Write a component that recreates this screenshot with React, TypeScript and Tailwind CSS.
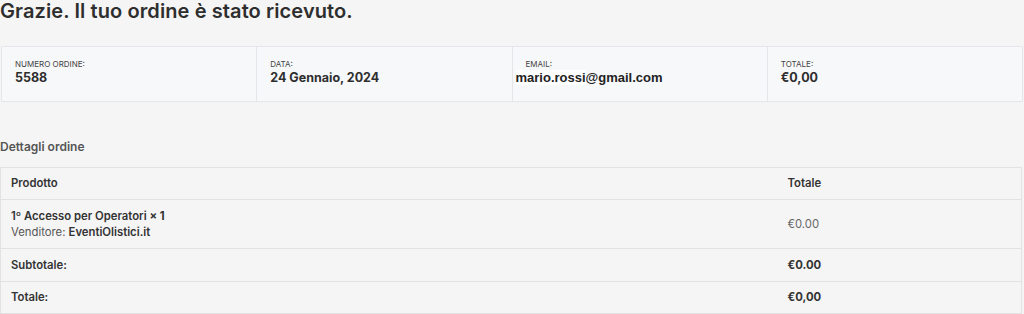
import React from 'react';

const overview = [
  { label: 'NUMERO ORDINE:', value: '5588' },
  { label: 'DATA:', value: '24 Gennaio, 2024' },
  { label: 'EMAIL:', value: 'email' },
  { label: 'TOTALE:', value: '€0,00' },
];

const App: React.FC = () => {
  return (
    <div className="min-h-screen w-full bg-[#f5f5f5] text-[#333] font-['Inter',sans-serif]">
      <h1 className="text-[20px] leading-[20px] font-semibold tracking-[0.1px] text-[#2e2e2e] pt-[1px]">
        Grazie. Il tuo ordine è stato ricevuto.
      </h1>

      <div className="mt-[25px] ml-[1px] w-[1022px] h-[56px] flex border border-[#e4e6ea] bg-[#f7f8fa]">
        {overview.map((item, i) => (
          <div
            key={item.label}
            className={`flex-1 flex flex-col pt-[12px] pl-[13px] ${i < 3 ? 'border-r border-[#e4e6ea]' : ''}`}
          >
            <span className="text-[8px] leading-[10px] text-[#444] uppercase">{item.label}</span>
            {item.value === 'email' ? (
              <span className="-ml-[10px] mt-[1px] text-[13px] leading-[16px] font-bold text-[#222] font-['Liberation_Sans',Arial,sans-serif]">
                <span className="bg-white">mario.rossi</span>@gmail.com
              </span>
            ) : (
              <span className="mt-[2px] text-[12.5px] leading-[14px] font-bold text-[#2e2e2e]">{item.value}</span>
            )}
          </div>
        ))}
      </div>

      <h2 className="mt-[38px] text-[12px] leading-[14px] font-semibold text-[#555]">Dettagli ordine</h2>

      <table className="mt-[13px] w-[1022px] border-collapse text-[11.3px] text-[#333]">
        <thead>
          <tr className="h-[32px]">
            <th className="border border-[#e2e2e2] border-r-0 text-left font-semibold pl-[10px] w-[776px]">Prodotto</th>
            <th className="border border-[#e2e2e2] border-l-0 text-left font-semibold pl-[11px]">Totale</th>
          </tr>
        </thead>
        <tbody>
          <tr className="h-[49px]">
            <td className="border border-[#e2e2e2] border-r-0 pl-[10px] leading-[16px]">
              <div className="font-semibold">1º Accesso per Operatori <span className="font-bold">× 1</span></div>
              <div className="text-[#555]">
                Venditore: <span className="font-semibold text-[#333]">EventiOlistici.it</span>
              </div>
            </td>
            <td className="border border-[#e2e2e2] border-l-0 pl-[11px] text-[#666]">€0.00</td>
          </tr>
          <tr className="h-[33px]">
            <th className="border border-[#e2e2e2] border-r-0 text-left font-semibold pl-[10px]">Subtotale:</th>
            <td className="border border-[#e2e2e2] border-l-0 pl-[11px] font-bold">€0.00</td>
          </tr>
          <tr className="h-[32px]">
            <th className="border border-[#e2e2e2] border-r-0 text-left font-semibold pl-[10px]">Totale:</th>
            <td className="border border-[#e2e2e2] border-l-0 pl-[11px] font-bold">€0,00</td>
          </tr>
        </tbody>
      </table>
    </div>
  );
};

export default App;
